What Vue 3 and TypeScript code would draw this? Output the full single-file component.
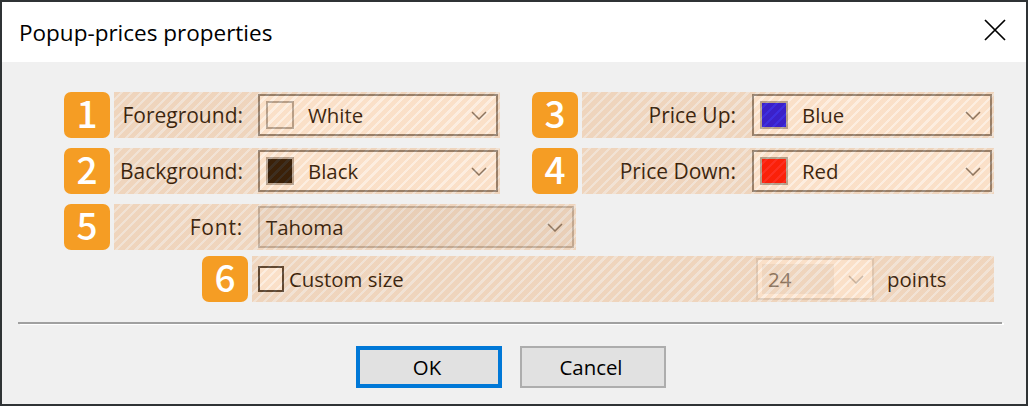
<script setup lang="ts">
interface Field {
  num: number;
  label: string;
  value: string;
  color: string;
}

const fields: Field[][] = [
  [
    { num: 1, label: "Foreground:", value: "White", color: "#ffffff" },
    { num: 3, label: "Price Up:", value: "Blue", color: "#0000ff" },
  ],
  [
    { num: 2, label: "Background:", value: "Black", color: "#000000" },
    { num: 4, label: "Price Down:", value: "Red", color: "#ff0000" },
  ],
];
</script>

<template>
  <div class="window">
    <div class="titlebar">
      <span class="title">Popup-prices properties</span>
      <svg class="close" width="22" height="22" viewBox="0 0 22 22">
        <path d="M1 1L21 21M21 1L1 21" stroke="#000" stroke-width="1.7" fill="none" />
      </svg>
    </div>

    <div class="content">
      <div v-for="(row, i) in fields" :key="i" class="row">
        <div v-for="f in row" :key="f.num" class="group">
          <div class="badge">{{ f.num }}</div>
          <div class="band" :class="f.num > 2 ? 'band-right' : 'band-left'">
            <span class="label">{{ f.label }}</span>
            <div class="select">
              <span class="swatch" :style="{ background: f.color }"></span>
              <span class="select-text">{{ f.value }}</span>
              <svg class="chevron" width="16" height="9" viewBox="0 0 16 9">
                <path d="M1 1L8 8L15 1" stroke="#6e6e6e" stroke-width="1.5" fill="none" />
              </svg>
            </div>
          </div>
        </div>
      </div>

      <div class="row">
        <div class="group">
          <div class="badge">5</div>
          <div class="band band-font">
            <span class="label label-font">Font:</span>
            <div class="select select-font">
              <span class="font-name">Tahoma</span>
              <svg class="chevron" width="16" height="9" viewBox="0 0 16 9">
                <path d="M1 1L8 8L15 1" stroke="#6e6e6e" stroke-width="1.5" fill="none" />
              </svg>
            </div>
          </div>
        </div>
      </div>

      <div class="row row-size">
        <div class="badge">6</div>
        <div class="band band-size">
          <span class="checkbox"></span>
          <span class="check-label">Custom size</span>
          <div class="size-select">
            <span class="size-edit">24</span>
            <svg class="size-chevron" width="16" height="9" viewBox="0 0 16 9">
              <path d="M1 1L8 8L15 1" stroke="#bcbcbc" stroke-width="1.5" fill="none" />
            </svg>
          </div>
          <span class="points">points</span>
        </div>
      </div>
    </div>

    <div class="separator"></div>

    <div class="footer">
      <button class="btn btn-default">OK</button>
      <button class="btn">Cancel</button>
    </div>
  </div>
</template>

<style>
html,
body {
  margin: 0;
  background: #f0f0f0;
}
</style>

<style scoped>
.window {
  box-sizing: border-box;
  width: 1028px;
  height: 406px;
  border: 2px solid #2f3335;
  background: #f0f0f0;
  display: flex;
  flex-direction: column;
  font-family: "Open Sans", "Noto Sans", sans-serif;
  font-size: 20.4px;
  color: #000;
}

.titlebar {
  height: 60px;
  background: #fff;
  display: flex;
  align-items: center;
  justify-content: space-between;
  padding: 0 20px 0 17px;
  flex-shrink: 0;
}

.title {
  font-size: 22.5px;
}

.close {
  margin-top: -4px;
}

.content {
  padding: 30px 0 0 62px;
  display: flex;
  flex-direction: column;
  gap: 10px;
}

.row {
  display: flex;
  gap: 32px;
  height: 46px;
}

.row-size {
  margin-top: -4px;
  margin-left: 138px;
  gap: 4px;
}

.group {
  display: flex;
  gap: 4px;
}

.badge {
  box-sizing: border-box;
  width: 46px;
  height: 46px;
  padding-bottom: 5px;
  border-radius: 7px;
  background: #f59d24;
  color: #fff;
  font-family: "Noto Sans CJK JP", sans-serif;
  font-size: 37px;
  font-weight: 500;
  line-height: 41px;
  text-align: center;
}

/* highlight laid over the dialog controls, text included */
.band {
  position: relative;
  height: 46px;
  display: flex;
  align-items: center;
}

.band::after {
  content: "";
  position: absolute;
  inset: 0;
  pointer-events: none;
  background: repeating-linear-gradient(
    135deg,
    rgba(236, 131, 36, 0.25) 0,
    rgba(236, 131, 36, 0.25) 4.6px,
    rgba(245, 185, 130, 0.25) 4.6px,
    rgba(245, 185, 130, 0.25) 7px
  );
}

.band-left {
  width: 386px;
}

.band-right {
  width: 412px;
}

.band-font {
  width: 462px;
}

.band-size {
  width: 742px;
}

.label {
  width: 129px;
  margin-right: 15px;
  text-align: right;
  flex-shrink: 0;
  font-size: 21px;
}

.label-font {
  letter-spacing: 0.8px;
}

.band-right .label {
  width: 154px;
  margin-right: 16px;
}

.select {
  box-sizing: border-box;
  width: 240px;
  height: 42px;
  border: 2px solid #7d7d7d;
  background: #fff;
  display: flex;
  align-items: center;
  padding: 0 9px 0 6px;
}

.select-font {
  width: 316px;
  border-color: #b4b4b4;
  background: #e8e8e8;
}

.swatch {
  box-sizing: border-box;
  width: 28px;
  height: 28px;
  border: 2px solid #a6a6a6;
  flex-shrink: 0;
}

.select-text {
  margin-left: 14px;
  flex: 1;
}

.font-name {
  flex: 1;
}

.chevron {
  flex-shrink: 0;
}

.checkbox {
  box-sizing: border-box;
  width: 26px;
  height: 26px;
  margin-left: 6px;
  border: 2px solid #333;
  background: #fff;
  flex-shrink: 0;
}

.check-label {
  margin-left: 5px;
  flex: 1;
}

.size-select {
  box-sizing: border-box;
  width: 118px;
  height: 42px;
  border: 2px solid #d9d9d9;
  background: #fff;
  display: flex;
  align-items: center;
  padding: 4px 8px 4px 4px;
  flex-shrink: 0;
}

.size-edit {
  width: 72px;
  height: 30px;
  line-height: 30px;
  padding-left: 6px;
  box-sizing: border-box;
  background: #f0f0f0;
  color: #6d6d6d;
}

.size-chevron {
  margin-left: 14px;
}

.points {
  width: 107px;
  margin-left: 13px;
  flex-shrink: 0;
}

.separator {
  margin: 20px 24px 0 16px;
  height: 2px;
  background: #a0a0a0;
  box-shadow: 2px 1px 0 #fff;
}

.footer {
  margin-top: 22px;
  display: flex;
  justify-content: center;
  gap: 18px;
  padding-right: 6px;
}

.btn {
  box-sizing: border-box;
  width: 146px;
  height: 42px;
  padding: 0 4px 0 0;
  border: 2px solid #adadad;
  background: #e1e1e1;
  font: inherit;
  color: #000;
}

.btn-default {
  border: 4px solid #0078d7;
}
</style>
